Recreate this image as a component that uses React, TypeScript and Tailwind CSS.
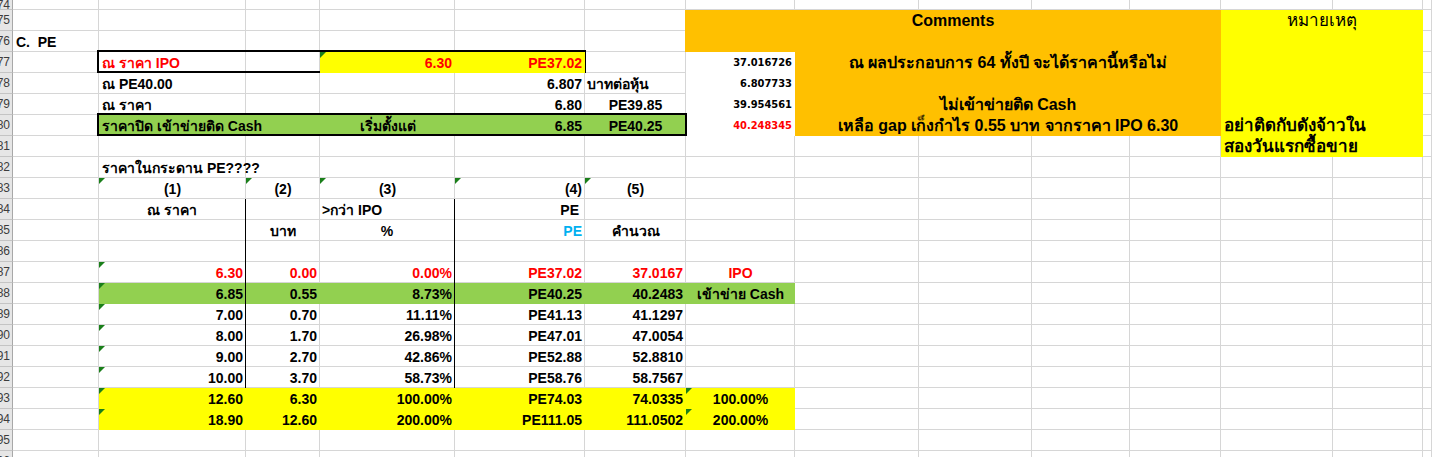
import { Fragment, type ReactNode } from 'react';

const GRID =
  'grid grid-cols-[13px_86px_147px_74px_135px_130px_101px_109px_124px_113px_98px_91px_112px_90px_1fr] grid-rows-[10px_repeat(22,21px)] col-start-1 row-start-1';

const TXT = 'flex items-end whitespace-nowrap leading-[16px] pb-[2px]';

function Tri() {
  return (
    <span className="absolute left-0 top-0 h-0 w-0 border-t-[6px] border-r-[6px] border-t-[#1a7f1a] border-r-transparent" />
  );
}

type Cell = {
  t?: ReactNode;
  a?: 'l' | 'r' | 'c';
  color?: string;
  tri?: boolean;
  br?: boolean;
  extra?: string;
};

const WIDTHS = ['w-[147px]', 'w-[74px]', 'w-[135px]', 'w-[130px]', 'w-[101px]', 'w-[109px]'];

const ALIGN_PLAIN = { l: 'justify-start pl-[3px]', r: 'justify-end pr-[3px]', c: 'justify-center' };
const ALIGN_BORDER = { l: 'justify-start pl-[2px]', r: 'justify-end pr-[2px]', c: 'justify-center' };

type Row = { bg?: string; cells: Cell[] };

const R = 'text-[#ff0000]';

const rows: Row[] = [
  { cells: [{ t: 'ราคาในกระดาน PE????', a: 'l' }, {}, {}, {}, {}, {}] },
  {
    cells: [
      { t: '(1)', a: 'c', tri: true },
      { t: '(2)', a: 'c', tri: true },
      { t: '(3)', a: 'c', tri: true },
      { t: '(4)', a: 'r', tri: true },
      { t: '(5)', a: 'c', tri: true },
      {},
    ],
  },
  {
    cells: [
      { t: 'ณ ราคา', a: 'c', br: true },
      {},
      { t: '>กว่า IPO', a: 'l', br: true },
      { t: 'PE', a: 'r', extra: 'pr-[6px]' },
      {},
      {},
    ],
  },
  {
    cells: [
      { br: true },
      { t: 'บาท', a: 'c' },
      { t: '%', a: 'c', br: true },
      { t: 'PE', a: 'r', color: 'text-[#00b0f0]' },
      { t: 'คำนวณ', a: 'c' },
      {},
    ],
  },
  { cells: [{ br: true }, {}, { br: true }, {}, {}, {}] },
  {
    cells: [
      { t: '6.30', a: 'r', br: true, tri: true, color: R },
      { t: '0.00', a: 'r', color: R },
      { t: '0.00%', a: 'r', br: true, color: R },
      { t: 'PE37.02', a: 'r', color: R },
      { t: '37.0167', a: 'r', color: R },
      { t: 'IPO', a: 'c', color: R },
    ],
  },
  {
    bg: 'bg-[#92d050]',
    cells: [
      { t: '6.85', a: 'r', br: true, tri: true },
      { t: '0.55', a: 'r' },
      { t: '8.73%', a: 'r', br: true },
      { t: 'PE40.25', a: 'r' },
      { t: '40.2483', a: 'r' },
      { t: 'เข้าข่าย Cash', a: 'c' },
    ],
  },
  {
    cells: [
      { t: '7.00', a: 'r', br: true, tri: true },
      { t: '0.70', a: 'r' },
      { t: '11.11%', a: 'r', br: true },
      { t: 'PE41.13', a: 'r' },
      { t: '41.1297', a: 'r' },
      {},
    ],
  },
  {
    cells: [
      { t: '8.00', a: 'r', br: true, tri: true },
      { t: '1.70', a: 'r' },
      { t: '26.98%', a: 'r', br: true },
      { t: 'PE47.01', a: 'r' },
      { t: '47.0054', a: 'r' },
      {},
    ],
  },
  {
    cells: [
      { t: '9.00', a: 'r', br: true, tri: true },
      { t: '2.70', a: 'r' },
      { t: '42.86%', a: 'r', br: true },
      { t: 'PE52.88', a: 'r' },
      { t: '52.8810', a: 'r' },
      {},
    ],
  },
  {
    cells: [
      { t: '10.00', a: 'r', br: true, tri: true },
      { t: '3.70', a: 'r' },
      { t: '58.73%', a: 'r', br: true },
      { t: 'PE58.76', a: 'r' },
      { t: '58.7567', a: 'r' },
      {},
    ],
  },
  {
    bg: 'bg-[#ffff00]',
    cells: [
      { t: '12.60', a: 'r', tri: true },
      { t: '6.30', a: 'r' },
      { t: '100.00%', a: 'r' },
      { t: 'PE74.03', a: 'r' },
      { t: '74.0335', a: 'r' },
      { t: '100.00%', a: 'c', tri: true },
    ],
  },
  {
    bg: 'bg-[#ffff00]',
    cells: [
      { t: '18.90', a: 'r', tri: true },
      { t: '12.60', a: 'r' },
      { t: '200.00%', a: 'r' },
      { t: 'PE111.05', a: 'r' },
      { t: '111.0502', a: 'r' },
      { t: '200.00%', a: 'c', tri: true },
    ],
  },
];

function LeftBlock() {
  return (
    <div className="col-start-3 col-span-6 row-start-9 row-span-13 flex flex-col">
      {rows.map((row, i) => (
        <div key={i} className={`flex h-[21px] shrink-0 ${row.bg ?? ''}`}>
          {row.cells.map((c, j) => {
            const a = c.a ?? 'l';
            const al = c.br ? ALIGN_BORDER[a] : ALIGN_PLAIN[a];
            return (
              <div
                key={j}
                className={`relative shrink-0 h-[21px] ${WIDTHS[j]} ${TXT} ${al} ${c.br ? 'border-r border-black' : ''} ${
                  c.color ?? ''
                } ${c.extra ?? ''}`}
              >
                {c.tri && <Tri />}
                {c.t}
              </div>
            );
          })}
        </div>
      ))}
    </div>
  );
}

function BaseGrid() {
  const nums = Array.from({ length: 23 }, (_, i) => 74 + i);
  return (
    <div className={GRID}>
      {nums.map((n) => (
        <Fragment key={n}>
          <div className="flex items-center justify-end overflow-hidden bg-[#e6e6e6] border-r border-b border-r-[#a8a8a8] border-b-[#c4c4c4] pr-[2px] text-[12px] font-normal leading-[14px] text-[#3c3c3c]">
            {n}
          </div>
          {Array.from({ length: 14 }).map((_, j) => (
            <div key={j} className="border-r border-b border-[#d6d6d6]" />
          ))}
        </Fragment>
      ))}
    </div>
  );
}

const GV = "flex items-end justify-end pr-[3px] pb-[3px] bg-white font-['DejaVu_Sans_Condensed','DejaVu_Sans',sans-serif] text-[11px] leading-[14px] whitespace-nowrap";

function Overlay() {
  return (
    <div className={GRID}>
      {/* row 76 */}
      <div className={`col-start-2 row-start-3 whitespace-pre ${TXT} pl-[3px]`}>C.  PE</div>

      {/* orange comments */}
      <div className="col-start-8 col-span-5 row-start-2 row-span-2 -ml-px flex flex-col bg-[#ffc000] text-[16px]">
        <div className={`h-[21px] shrink-0 ${TXT} justify-center`}>Comments</div>
      </div>
      <div className="col-start-9 col-span-4 row-start-4 row-span-4 flex flex-col bg-[#ffc000] text-[16px]">
        <div className={`h-[21px] shrink-0 ${TXT} justify-center`}>ณ ผลประกอบการ 64 ทั้งปี จะได้ราคานี้หรือไม่</div>
        <div className="h-[21px] shrink-0" />
        <div className={`h-[21px] shrink-0 ${TXT} justify-center`}>ไม่เข้าข่ายติด Cash</div>
        <div className={`h-[21px] shrink-0 ${TXT} justify-center`}>เหลือ gap เก็งกำไร 0.55 บาท จากราคา IPO 6.30</div>
      </div>

      {/* yellow notes */}
      <div className="col-start-13 col-span-2 row-start-2 row-span-7 flex flex-col bg-[#ffff00] text-[17px]">
        <div className={`h-[21px] shrink-0 ${TXT} justify-center font-normal`}>หมายเหตุ</div>
        <div className="h-[84px] shrink-0" />
        <div className={`h-[21px] shrink-0 ${TXT} pl-[3px]`}>อย่าติดกับดังจ้าวใน</div>
        <div className={`h-[21px] shrink-0 ${TXT} pl-[3px]`}>สองวันแรกซื้อขาย</div>
      </div>

      {/* G column values */}
      <div className={`col-start-8 row-start-4 ${GV}`}>37.016726</div>
      <div className={`col-start-8 row-start-5 ${GV}`}>6.807733</div>
      <div className={`col-start-8 row-start-6 ${GV}`}>39.954561</div>
      <div className={`col-start-8 row-start-7 ${GV} text-[#ff0000]`}>40.248345</div>

      {/* row 77 */}
      <div className={`col-start-3 col-span-2 row-start-4 ${TXT} pl-[3px] text-[#ff0000]`}>ณ ราคา IPO</div>
      <div className="relative col-start-5 col-span-2 row-start-4 grid grid-cols-[135px_130px] bg-[#ffff00] text-[#ff0000]">
        <Tri />
        <div className={`${TXT} justify-end pr-[3px]`}>6.30</div>
        <div className={`${TXT} justify-end pr-[3px]`}>PE37.02</div>
      </div>
      <div className="col-start-3 col-span-4 row-start-4 -ml-[2px] -mt-[2px] -mr-px border-2 border-black" />

      {/* row 78 */}
      <div className={`col-start-3 row-start-5 ${TXT} pl-[3px]`}>ณ PE40.00</div>
      <div className={`col-start-6 row-start-5 ${TXT} justify-end pr-[3px]`}>6.807</div>
      <div className={`col-start-7 row-start-5 ${TXT} pl-[2px]`}>บาทต่อหุ้น</div>

      {/* row 79 */}
      <div className={`col-start-3 row-start-6 ${TXT} pl-[3px]`}>ณ ราคา</div>
      <div className={`col-start-6 row-start-6 ${TXT} justify-end pr-[3px]`}>6.80</div>
      <div className={`col-start-7 row-start-6 ${TXT} justify-center`}>PE39.85</div>

      {/* row 80 */}
      <div className="col-start-3 col-span-5 row-start-7 grid grid-cols-[147px_74px_135px_130px_101px] bg-[#92d050]">
        <div className={`${TXT} pl-[3px]`}>ราคาปิด เข้าข่ายติด Cash</div>
        <div />
        <div className={`${TXT} justify-center`}>เริ่มตั้งแต่</div>
        <div className={`${TXT} justify-end pr-[3px]`}>6.85</div>
        <div className={`${TXT} justify-center`}>PE40.25</div>
      </div>
      <div className="col-start-3 col-span-5 row-start-7 -ml-[2px] -mt-[2px] -mr-px border-2 border-black" />

      <LeftBlock />
    </div>
  );
}

export default function App() {
  return (
    <div className="h-[457px] w-[1432px] overflow-hidden bg-white font-['Liberation_Sans',sans-serif] text-[14px] font-bold text-black">
      <div className="grid">
        <BaseGrid />
        <Overlay />
      </div>
    </div>
  );
}
